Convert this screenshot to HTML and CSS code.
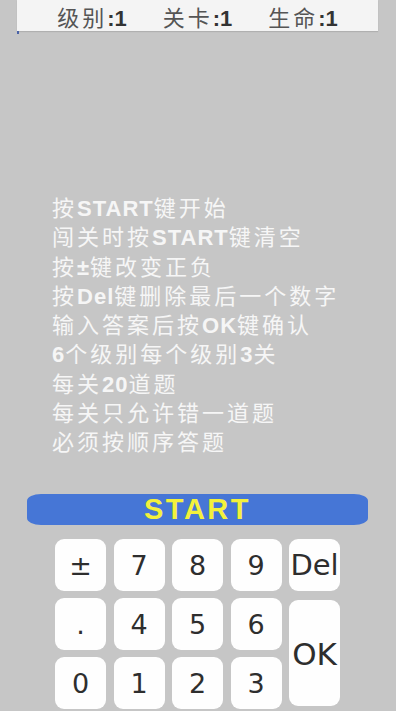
FILE: index.html
```html
<!DOCTYPE html>
<html>
<head>
    <meta charset="UTF-8">
    <title>口算闯关</title>
    <link rel="stylesheet" href="styles.css">
</head>
<body>
    <div class="status-bar">
        <span>级别<b>:1</b></span>
        <span>关卡<b>:1</b></span>
        <span>生命<b>:1</b></span>
    </div>
    <div class="progress"><div class="progress-fill"></div></div>

    <div class="rules">
        <p>按<b>START</b>键开始</p>
        <p>闯关时按<b>START</b>键清空</p>
        <p>按<b>±</b>键改变正负</p>
        <p>按<b>Del</b>键删除最后一个数字</p>
        <p>输入答案后按<b>OK</b>键确认</p>
        <p><b>6</b>个级别每个级别<b>3</b>关</p>
        <p>每关<b>20</b>道题</p>
        <p>每关只允许错一道题</p>
        <p>必须按顺序答题</p>
    </div>

    <button class="start-btn">START</button>

    <div class="keypad">
        <button class="key">±</button>
        <button class="key">7</button>
        <button class="key">8</button>
        <button class="key">9</button>
        <button class="key key-word">Del</button>
        <button class="key">.</button>
        <button class="key">4</button>
        <button class="key">5</button>
        <button class="key">6</button>
        <button class="key key-word key-ok">OK</button>
        <button class="key">0</button>
        <button class="key">1</button>
        <button class="key">2</button>
        <button class="key">3</button>
    </div>
</body>
</html>
```

FILE: styles.css
```css
body {
    margin: 0;
    width: 396px;
    height: 711px;
    overflow: hidden;
    background-color: #c6c6c6;
    font-family: "Noto Sans CJK SC", sans-serif;
}
.status-bar {
    margin: 0 18px 0 17px;
    height: 31px;
    background-color: #f4f4f4;
    box-shadow: 0 1px 1px #b0b0b0;
    display: flex;
    justify-content: center;
    align-items: center;
    gap: 36px;
    color: #555;
    font-size: 22px;
    letter-spacing: 3px;
}
.status-bar b {
    font-family: "Liberation Sans", sans-serif;
    font-size: 22px;
    color: #333;
    letter-spacing: 0;
}
.progress {
    margin: 0 17px;
    height: 3px;
}
.progress-fill {
    width: 2px;
    height: 3px;
    background-color: #4a63a8;
}
.rules {
    padding: 158px 0 0 52px;
    height: 302px;
    color: #f6f6f6;
    font-size: 22px;
    letter-spacing: 3px;
    line-height: 29.25px;
}
.rules p {
    margin: 0;
    height: 29.25px;
}
.rules b {
    font-family: "Liberation Sans", sans-serif;
    letter-spacing: 1px;
    line-height: 1;
}
.start-btn {
    display: block;
    margin: 0 28px 0 27px;
    width: 341px;
    height: 31px;
    border: none;
    border-radius: 14px / 7px;
    background-color: #4676d6;
    color: #f3f13c;
    font-family: "Liberation Sans", sans-serif;
    font-weight: bold;
    font-size: 29px;
    letter-spacing: 2.5px;
    line-height: 31px;
    padding: 0;
}
.keypad {
    margin-top: 14px;
    padding-left: 55px;
    display: grid;
    grid-template-columns: repeat(5, 51px);
    grid-auto-rows: 52px;
    gap: 7px 7.5px;
}
.key {
    border: none;
    border-radius: 9px;
    background-color: #fefefe;
    color: #2e2e2e;
    font-family: "DejaVu Sans", sans-serif;
    font-size: 27px;
    padding: 0;
}
.key-word {
    font-size: 29px;
}
.key-ok {
    grid-column: 5;
    grid-row: 2 / span 2;
    margin: 2px 0 3px;
    font-size: 31px;
    padding-top: 2px;
}
```
